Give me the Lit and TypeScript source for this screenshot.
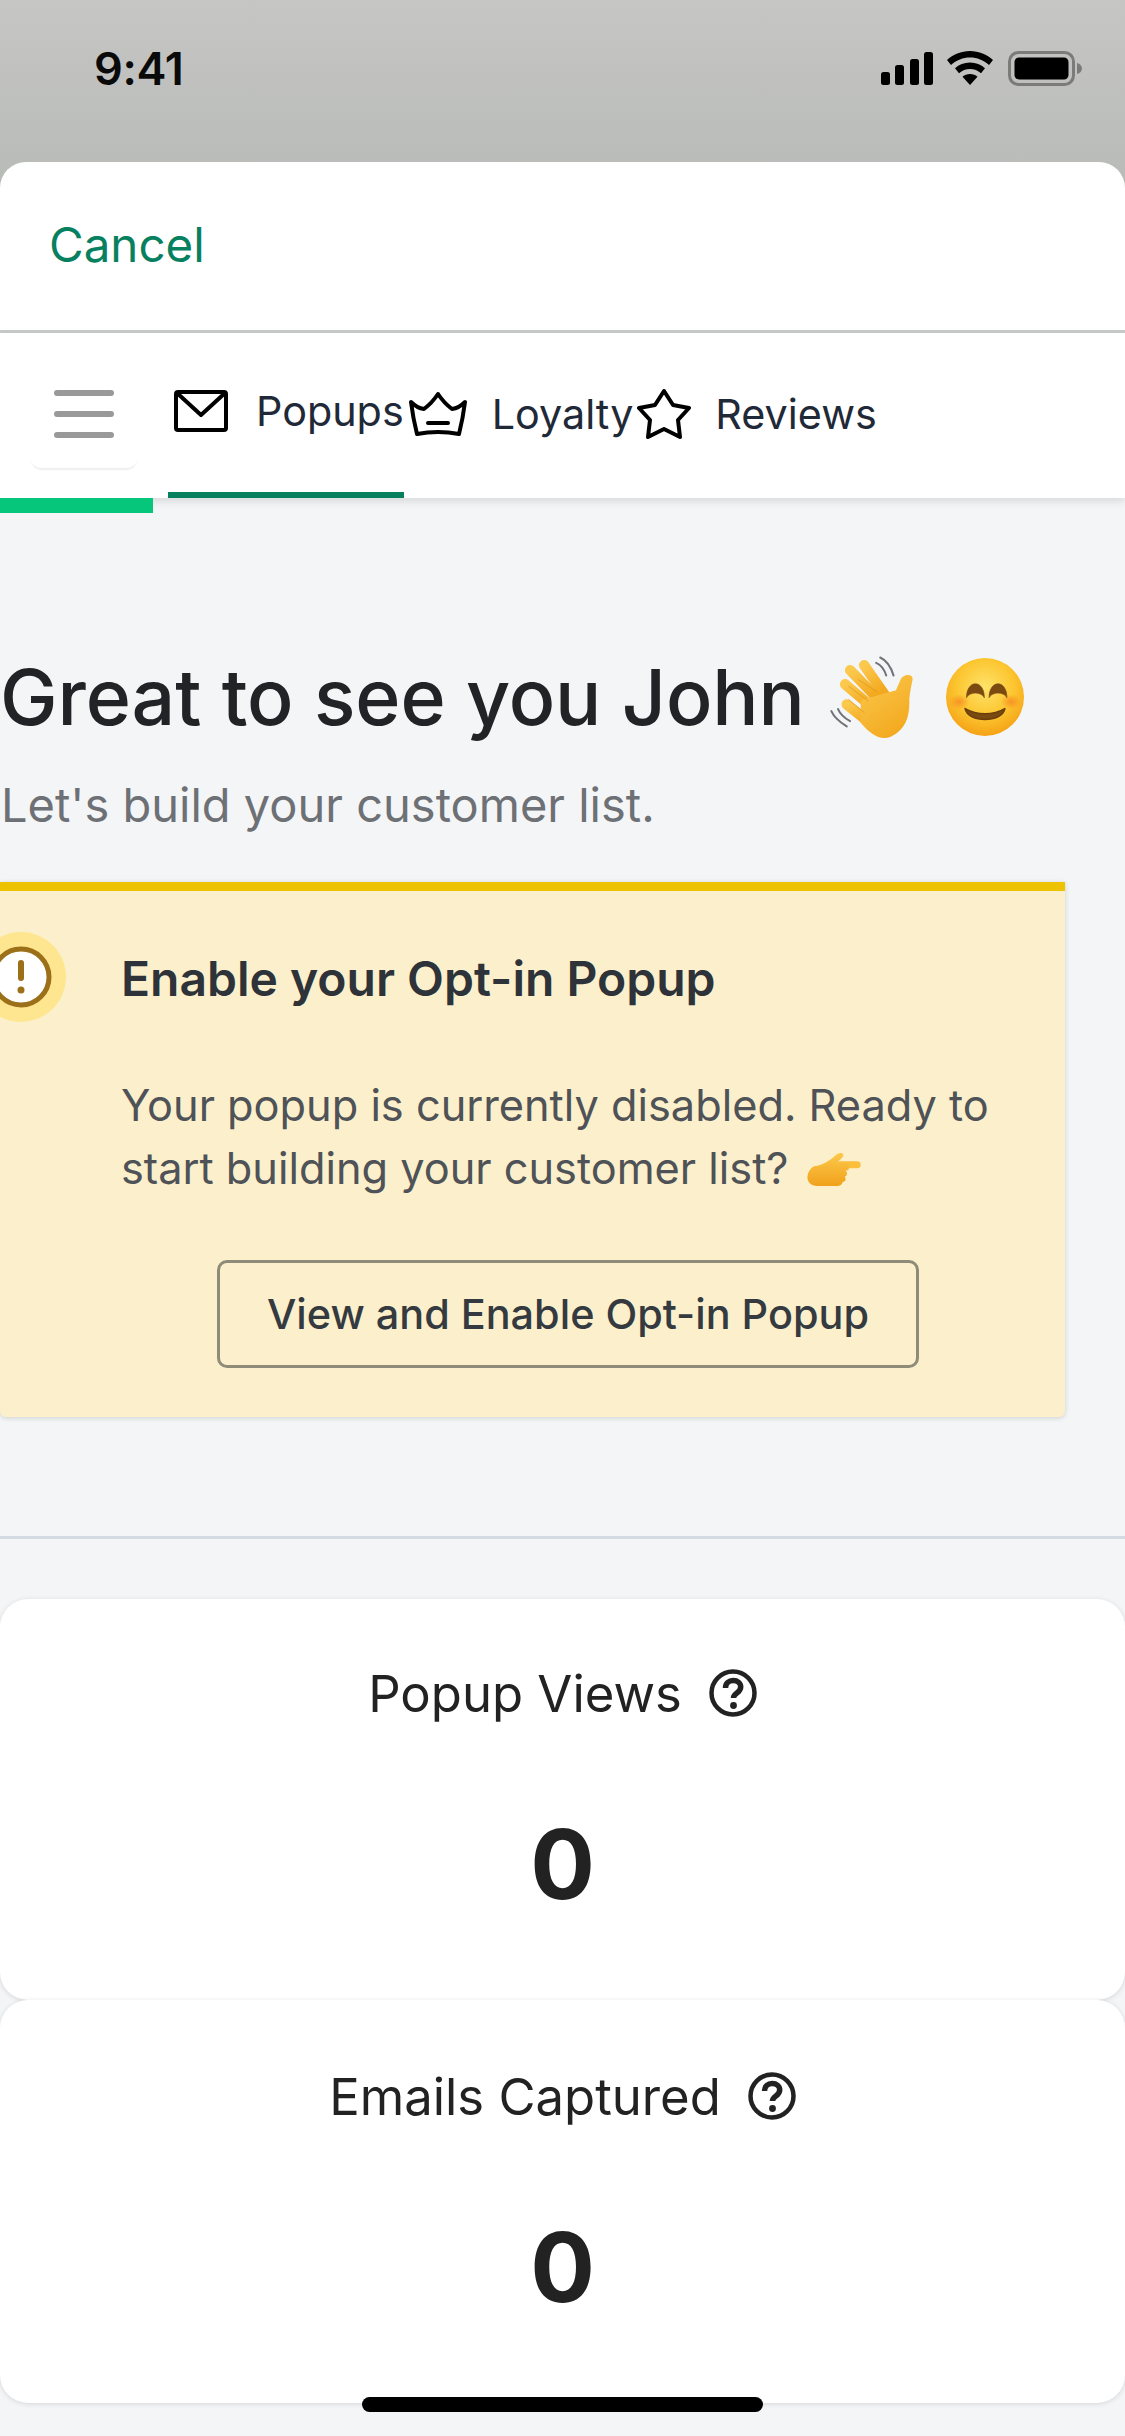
import { LitElement, html, css } from "lit";
import { customElement } from "lit/decorators.js";

const helpIcon = html`<svg class="help" viewBox="0 0 48 48" fill="none">
  <circle cx="24" cy="24" r="21.5" stroke="#222" stroke-width="4.5"/>
  <path d="M16.5 19c0-4.500 3.300-7.500 7.700-7.500 4.300 0 7.500 2.700 7.500 6.500 0 3-1.700 4.500-3.800 6-2 1.400-3.400 2.600-3.400 5" stroke="#222" stroke-width="5.500" fill="none"/>
  <circle cx="24.500" cy="36.500" r="3.400" fill="#222"/>
</svg>`;

const wave = html`<svg class="wave" viewBox="145 100 260 256" fill="none">
  <defs><linearGradient id="hg" x1="0" y1="0" x2="0.6" y2="1"><stop offset="0" stop-color="#fbc94e"/><stop offset="1" stop-color="#f3a91f"/></linearGradient></defs>
  <g stroke="#6f7378" stroke-width="6" stroke-linecap="round">
    <path d="M286 126c14 6 24 18 30 38"/><path d="M298 110c18 8 32 28 40 54"/>
    <path d="M152 270c8 18 24 32 46 46"/><path d="M172 264c6 14 18 26 36 36"/>
  </g>
  <g stroke="url(#hg)" stroke-linecap="round" stroke-width="31">
    <path d="M250 133 312 222"/><path d="M208 148 290 232"/><path d="M193 190 278 262"/><path d="M198 250 270 308"/>
  </g>
  <path d="M240 238 345 208l14-32c4-14 36-22 36-2-4 20-8 38-10 60 2 50-10 90-54 112-32 14-62-6-92-42z" fill="url(#hg)"/>
  <g stroke="#dd9420" stroke-width="2.500" stroke-linecap="round" opacity=".8">
    <path d="M232 176 288 212"/><path d="M204 196 262 240"/><path d="M204 236 250 274"/>
  </g>
</svg>`;

const smile = html`<svg class="smile" viewBox="0 0 228 228">
  <defs>
    <radialGradient id="fg" cx=".5" cy=".38" r=".68"><stop offset="0" stop-color="#fee36a"/><stop offset=".55" stop-color="#fcc52f"/><stop offset="1" stop-color="#f39a10"/></radialGradient>
    <radialGradient id="ck"><stop offset="0" stop-color="#f78a22" stop-opacity=".85"/><stop offset="1" stop-color="#f78a22" stop-opacity="0"/></radialGradient>
  </defs>
  <circle cx="114" cy="114" r="114" fill="url(#fg)"/>
  <ellipse cx="38" cy="128" rx="30" ry="22" fill="url(#ck)"/><ellipse cx="190" cy="128" rx="30" ry="22" fill="url(#ck)"/>
  <path d="M60 116c0-54 52-54 52 0-8-18-44-18-52 0zM126 116c0-54 52-54 52 0-8-18-44-18-52 0z" fill="#7a4a10" stroke="#7a4a10" stroke-width="2" stroke-linejoin="round"/>
  <path d="M56 148c34 20 82 20 116 0-8 42-108 42-116 0z" fill="#7a4a10" stroke="#6b3f0c" stroke-width="5" stroke-linejoin="round"/>
</svg>`;

const point = html`<svg class="point" viewBox="0 0 160 108">
  <defs><linearGradient id="pg" x1="0" y1="0" x2="0" y2="1"><stop offset="0" stop-color="#fcc94a"/><stop offset="1" stop-color="#f1a11c"/></linearGradient></defs>
  <rect x="85" y="28" width="75" height="21" rx="10.500" fill="#fbbf3c"/>
  <path d="M24 42c18-2 40-14 56-28 8-10 26-16 28-6 1 8-10 16-20 24l36 2v20l-10 2c8 4 6 16-2 18 6 6 2 16-6 16-2 8-8 12-16 12H30C6 102-4 84 2 66 5 54 14 44 24 42z" fill="url(#pg)"/>
</svg>`;

@customElement("app-root")
export class AppRoot extends LitElement {
  static styles = css`
    :host { display: block; position: relative; width: 1125px; height: 2436px; overflow: hidden; font-family: Inter, "Noto Sans", sans-serif; background: #f4f5f7; }
    .top { background: linear-gradient(#c6c6c4, #b7bab6); height: 200px; margin-bottom: -38px; }
    .status { height: 136px; box-sizing: border-box; display: flex; align-items: center; padding: 0 43px 0 94px; font-size: 45px; font-weight: 600; color: #0a0a0a; }
    .status .time { flex: 1; letter-spacing: -0.3px; }
    .signal { width: 52px; height: 33px; margin-right: 14px; }
    .wifi { width: 46px; height: 34px; margin-right: 15px; }
    .batt { width: 74px; height: 35px; }
    .sheet { position: relative; }
    .cancel { background: #fff; border-radius: 26px 26px 0 0; display: flex; align-items: center; padding: 0 0 3px 49px; box-sizing: border-box; border-bottom: 3px solid #c9cbca; height: 171px; font-size: 47.500px; color: #07805f; }
    .nav { height: 165px; background: #fff; display: flex; align-items: stretch; padding-left: 30px; box-sizing: border-box; box-shadow: 0 3px 8px rgba(60,60,60,.16); position: relative; color: #1f2937; font-size: 41.300px; }
    .menu { width: 108px; height: 135px; box-sizing: border-box; padding: 57px 0 0 24px; margin-right: 30px; border-radius: 0 0 12px 12px; box-shadow: 0 3px 2px -1px rgba(0,0,0,.07); display: flex; flex-direction: column; gap: 15px; }
    .menu i { display: block; width: 60px; height: 6px; border-radius: 3px; background: #999; }
    .tab { display: flex; align-items: center; white-space: nowrap; }
    .tab span { padding-bottom: 3px; }
    .tab.active { border-bottom: 6px solid #07805f; box-sizing: border-box; padding: 0 0 0 6px; gap: 28px; }
    .tab.t2 { padding-left: 4px; gap: 24px; }
    .tab.t3 { padding-left: 4px; gap: 24px; }
    .env { width: 54px; height: 42px; margin-top: -4px; }
    .crown { width: 60px; height: 46px; margin-top: -4px; }
    .star { width: 54px; height: 52px; margin-top: -4px; }
    .progress { width: 153px; height: 15px; background: #06c67c; position: relative; }
    .content { padding-top: 139px; }
    h1 { margin: 0; font-weight: 500; font-size: 77px; line-height: 90px; color: #212326; display: flex; align-items: center; white-space: nowrap; letter-spacing: -0.1px; }
    .wave { width: 87px; height: 86px; margin-left: 24px; }
    .smile { width: 78px; height: 78px; margin-left: 30px; }
    .sub { margin: 33px 0 0; padding-left: 1px; font-size: 47px; line-height: 60px; color: #6d7074; }
    .alert { margin: 47px 60px 0 0; background: #fbf0cb; border-top: 9px solid #edc200; border-radius: 0 0 6px 6px; padding: 41px 51px 49px 0; box-shadow: 0 1px 5px rgba(60,60,60,.2); }
    .ahead { display: flex; align-items: center; margin-left: -24px; gap: 55px; height: 90px; }
    .aicon { width: 90px; height: 90px; flex: none; }
    .atitle { font-size: 48px; font-weight: 600; color: #2d3339; padding-top: 2px; }
    .abody { margin: 52px 0 0 121px; font-size: 43.300px; line-height: 63px; color: #4f5257; }
    .point { width: 54px; height: 36px; vertical-align: -4px; margin-left: 6px; }
    .abtn { margin: 60px 0 0 122px; display: flex; justify-content: center; }
    .btn { width: 702px; height: 108px; box-sizing: border-box; border: 3px solid #8e8c78; border-radius: 10px; display: flex; align-items: center; justify-content: center; font-size: 41.400px; font-weight: 500; color: #343a3f; }
    .divider { margin-top: 119px; height: 3px; background: #d5dbe3; }
    .cards { margin-top: 60px; }
    .card { background: #fff; height: 401px; box-sizing: border-box; border-radius: 28px; padding-top: 65px; box-shadow: 0 1px 5px rgba(60,60,60,.16); position: relative; }
    .card.second { height: 403px; padding-top: 67px; }
    .label { display: flex; justify-content: center; align-items: center; gap: 27px; height: 58px; font-size: 50.800px; color: #222; }
    .help { width: 48px; height: 48px; }
    .value { margin-top: 92px; height: 100px; line-height: 100px; text-align: center; font-size: 96px; font-weight: 700; color: #222; }
    .home { position: absolute; left: 362px; top: 2397px; width: 401px; height: 15px; border-radius: 8px; background: #000; }
  `;

  render() {
    return html`
      <div class="top">
        <div class="status">
          <span class="time">9:41</span>
          <svg class="signal" viewBox="0 0 52 33"><rect x="0" y="20" width="9" height="13" rx="2.500"/><rect x="14" y="13" width="9" height="20" rx="2.500"/><rect x="29" y="7" width="9" height="26" rx="2.500"/><rect x="43" y="0" width="9" height="33" rx="2.500"/></svg>
          <svg class="wifi" viewBox="0 0 46 34"><path d="M23 0c9 0 17 3.500 23 9l-4 5C36.500 9 30 6.500 23 6.500S9.500 9 4 14L0 9C6 3.500 14 0 23 0z"/><path d="M23 11.500c6 0 11 2.200 15 5.700l-4 5c-3-2.700-7-4.200-11-4.200s-8 1.500-11 4.200l-4-5c4-3.500 9-5.700 15-5.700z"/><path d="M23 23c3 0 5.500 1 7.500 2.800L23 34l-7.500-8.200C17.500 24 20 23 23 23z"/></svg>
          <svg class="batt" viewBox="0 0 74 35"><rect x="1.500" y="1.500" width="64" height="32" rx="9" fill="none" stroke="#7b7c7a" stroke-width="3"/><rect x="6.500" y="6.500" width="54" height="22" rx="4.500"/><path d="M69 12c3 .5 5 3 5 5.500s-2 5-5 5.500z" fill="#7b7c7a"/></svg>
        </div>
      </div>
      <div class="sheet">
        <div class="cancel">Cancel</div>
        <div class="nav">
          <div class="menu"><i></i><i></i><i></i></div>
          <div class="tab active">
            <svg class="env" viewBox="0 0 54 42" fill="none" stroke="#000" stroke-width="4" stroke-linejoin="round"><rect x="2" y="2" width="50" height="38" rx="2"/><path d="M3 3 27 25 51 3"/></svg>
            <span>Popups</span>
          </div>
          <div class="tab t2">
            <svg class="crown" viewBox="0 0 60 46" fill="none" stroke="#000" stroke-width="4" stroke-linejoin="round" stroke-linecap="round"><path d="M3 11Q9 17 16 18 24 12 30 3 36 12 44 18 51 17 57 11 55 27 51 43 30 39 9 43 5 27 3 11Z"/><path d="M20 32H40"/></svg>
            <span>Loyalty</span>
          </div>
          <div class="tab t3">
            <svg class="star" viewBox="0 0 54 52" fill="none" stroke="#000" stroke-width="4" stroke-linejoin="round"><path d="M27 3 36 17 52 20 41 32 43 49 27 41 11 49 13 32 2 20 18 17Z"/></svg>
            <span>Reviews</span>
          </div>
        </div>
        <div class="progress"></div>
        <div class="content">
          <h1><span>Great to see you John</span>${wave}${smile}</h1>
          <p class="sub">Let's build your customer list.</p>
          <div class="alert">
            <div class="ahead">
              <svg class="aicon" viewBox="0 0 90 90">
                <circle cx="45" cy="45" r="45" fill="#fde68f"/>
                <circle cx="45" cy="45" r="28" fill="#fff" stroke="#9c6f19" stroke-width="5"/>
                <rect x="42" y="28" width="6" height="21" rx="3" fill="#9c6f19"/>
                <circle cx="45" cy="58" r="3.500" fill="#9c6f19"/>
              </svg>
              <div class="atitle">Enable your Opt-in Popup</div>
            </div>
            <div class="abody">Your popup is currently disabled. Ready to start building your customer list? ${point}</div>
            <div class="abtn"><div class="btn">View and Enable Opt-in Popup</div></div>
          </div>
          <div class="divider"></div>
          <div class="cards">
            <div class="card">
              <div class="label"><span>Popup Views</span>${helpIcon}</div>
              <div class="value">0</div>
            </div>
            <div class="card second">
              <div class="label"><span>Emails Captured</span>${helpIcon}</div>
              <div class="value">0</div>
            </div>
          </div>
        </div>
      </div>
      <div class="home"></div>
    `;
  }
}
